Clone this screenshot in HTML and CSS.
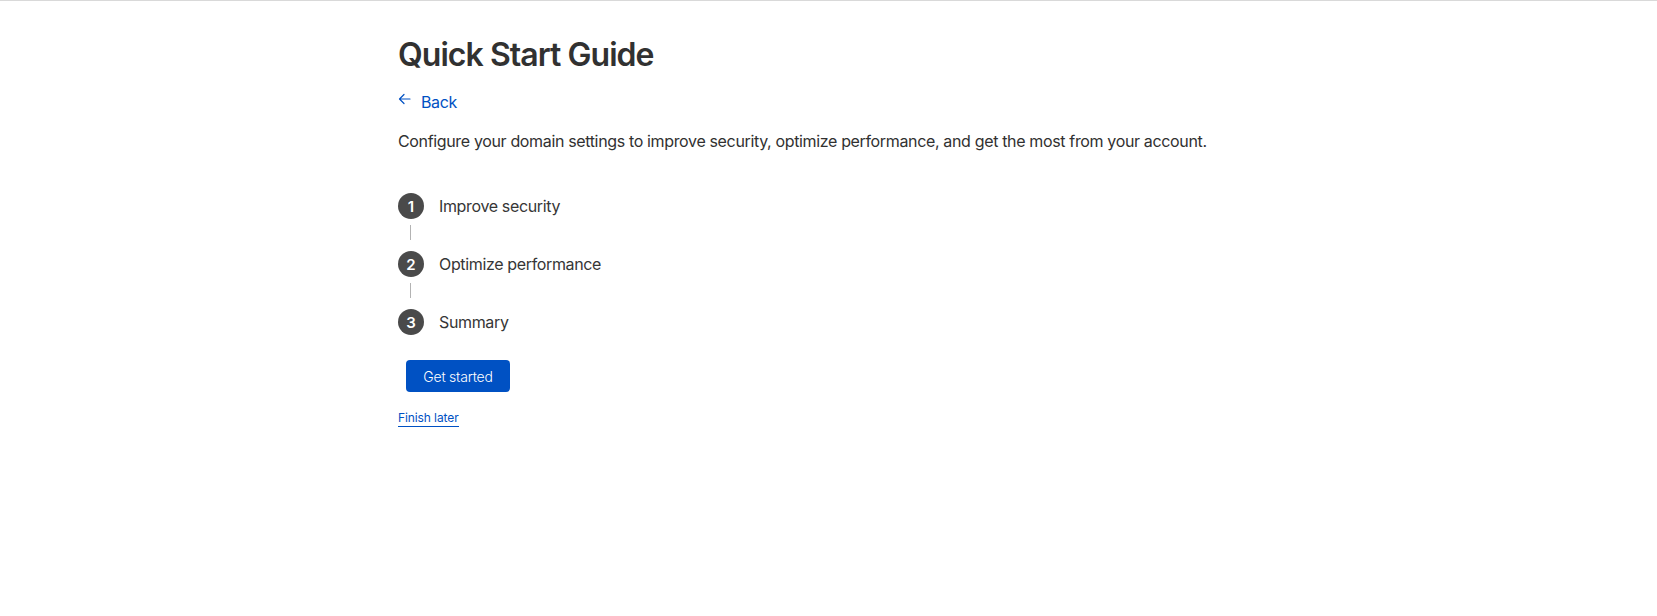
FILE: index.html
```html
<!DOCTYPE html>
<html lang="en">
<head>
<meta charset="utf-8">
<title>Quick Start Guide</title>
<link rel="stylesheet" href="styles.css">
</head>
<body>
<div class="topbar"></div>
<main class="container">
  <h1 class="title">Quick Start Guide</h1>
  <a class="back" href="#">
    <svg class="back-icon" width="13" height="12" viewBox="0 0 13 12" fill="none" stroke="currentColor" stroke-width="1.2" stroke-linecap="round" stroke-linejoin="round"><path d="M12 6H1.5M6 1.5L1.5 6L6 10.5"/></svg>
    <span>Back</span>
  </a>
  <p class="intro">Configure your domain settings to improve security, optimize performance, and get the most from your account.</p>
  <ol class="steps">
    <li class="step"><span class="num">1</span><span class="label">Improve security</span></li>
    <li class="connector"><span class="line"></span></li>
    <li class="step"><span class="num">2</span><span class="label">Optimize performance</span></li>
    <li class="connector"><span class="line"></span></li>
    <li class="step"><span class="num">3</span><span class="label">Summary</span></li>
  </ol>
  <button class="primary" type="button">Get started</button>
  <div class="later-row"><a class="later" href="#">Finish later</a></div>
</main>
</body>
</html>
```

FILE: styles.css
```css
* { box-sizing: border-box; }
html, body { margin: 0; padding: 0; background: #fff; }
body {
  font-family: Inter, "Noto Sans", "Liberation Sans", sans-serif;
  color: #313131;
  letter-spacing: -0.35px;
}
.topbar { height: 2px; border-top: 1px solid #d9d9d9; }
.container {
  width: 861px;
  margin: 0 auto;
  padding-top: 33px;
}
.title {
  margin: 0;
  font-size: 32px;
  line-height: 40px;
  font-weight: 600;
  color: #313131;
  letter-spacing: -0.95px;
}
.back {
  display: inline-flex;
  align-items: center;
  gap: 10px;
  margin-top: 15px;
  color: #0051c3;
  text-decoration: none;
  font-size: 16px;
  line-height: 24px;
}
.back-icon { margin-top: -6px; }
.intro {
  margin: 15px 0 0;
  font-size: 16px;
  line-height: 24px;
  color: #313131;
}
.steps {
  list-style: none;
  margin: 40px 0 0;
  padding: 0;
  display: flex;
  flex-direction: column;
}
.step {
  display: flex;
  align-items: center;
  gap: 15px;
  height: 26px;
}
.num {
  width: 26px;
  height: 26px;
  border-radius: 50%;
  background: #4a4a4a;
  color: #fff;
  font-size: 15px;
  font-weight: 600;
  letter-spacing: 0;
  display: flex;
  align-items: center;
  justify-content: center;
}
.label { font-size: 16px; line-height: 24px; color: #363636; }
.connector {
  height: 32px;
  display: flex;
  padding-top: 6px;
  padding-left: 12px;
}
.line { width: 1px; height: 15px; background: #b3b3b3; }
.primary {
  margin: 25px 0 0 8px;
  height: 32px;
  width: 104px;
  padding: 0;
  border: 0;
  border-radius: 4px;
  background: #0051c3;
  color: #fff;
  font-family: inherit;
  font-size: 14px;
  font-weight: 300;
  letter-spacing: -0.2px;
}
.later-row { margin-top: 14px; }
.later {
  display: inline-block;
  font-size: 12px;
  line-height: 14px;
  color: #0051c3;
  letter-spacing: -0.1px;
  text-decoration: none;
  padding-bottom: 1px;
  border-bottom: 1px solid #0051c3;
}
```
